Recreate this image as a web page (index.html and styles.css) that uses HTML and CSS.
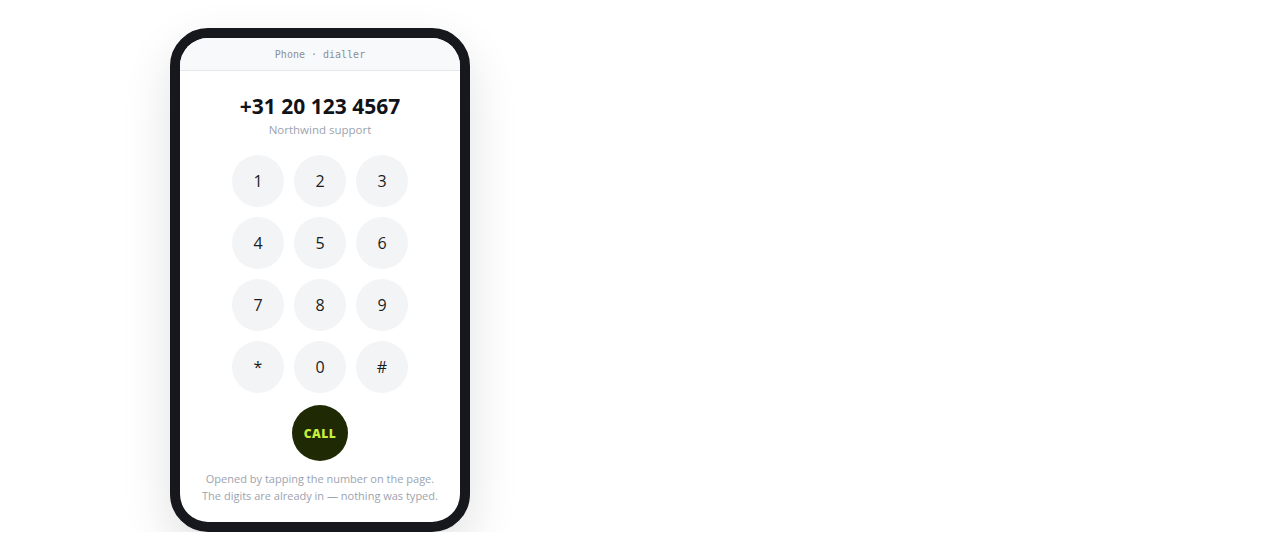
FILE: index.html
```html
<!DOCTYPE html>
<html lang="en">
<head>
<meta charset="utf-8">
<title>Phone dialler</title>
<link rel="stylesheet" href="styles.css">
</head>
<body>
<div class="phone">
  <div class="screen">
    <div class="bar">Phone · dialler</div>
    <div class="content">
      <div class="number">+31 20 123 4567</div>
      <div class="label">Northwind support</div>
      <div class="keypad">
        <button class="key">1</button>
        <button class="key">2</button>
        <button class="key">3</button>
        <button class="key">4</button>
        <button class="key">5</button>
        <button class="key">6</button>
        <button class="key">7</button>
        <button class="key">8</button>
        <button class="key">9</button>
        <button class="key">*</button>
        <button class="key">0</button>
        <button class="key">#</button>
      </div>
      <button class="call">CALL</button>
      <p class="note">Opened by tapping the number on the page.<br>The digits are already in — nothing was typed.</p>
    </div>
  </div>
</div>
</body>
</html>
```

FILE: styles.css
```css
html, body {
  margin: 0;
  padding: 0;
  background: #ffffff;
}
body {
  padding: 28px 0 0 170px;
  font-family: "Open Sans", "Noto Sans", sans-serif;
}
.phone {
  width: 300px;
  height: 504px;
  box-sizing: border-box;
  border: 10px solid #16181d;
  border-radius: 38px;
  background: #16181d;
  box-shadow: 0 20px 50px rgba(0, 0, 0, 0.12);
}
.screen {
  width: 280px;
  height: 484px;
  background: #ffffff;
  border-radius: 28px;
  overflow: hidden;
  display: flex;
  flex-direction: column;
}
.bar {
  height: 32px;
  border-bottom: 1px solid #e5e7eb;
  background: #f8f9fa;
  display: flex;
  align-items: center;
  justify-content: center;
  font-family: "DejaVu Sans Mono", "Liberation Mono", monospace;
  font-size: 10px;
  color: #8a8f98;
}
.content {
  display: flex;
  flex-direction: column;
  align-items: center;
  padding-top: 21px;
}
.number {
  font-size: 21px;
  line-height: 28px;
  font-weight: 700;
  color: #111318;
}
.label {
  margin-top: 2px;
  font-size: 11.5px;
  line-height: 16px;
  color: #9ca3af;
}
.keypad {
  margin-top: 17px;
  display: grid;
  grid-template-columns: repeat(3, 52px);
  grid-auto-rows: 52px;
  gap: 10px;
}
.key {
  border: none;
  padding: 0;
  border-radius: 50%;
  background: #f3f4f6;
  font-family: "Open Sans", "Noto Sans", sans-serif;
  font-size: 16px;
  color: #1a1c22;
}
.call {
  margin-top: 12px;
  width: 56px;
  height: 56px;
  border: none;
  padding: 0;
  border-radius: 50%;
  background: #1f2a05;
  color: #c8f03a;
  font-family: "Open Sans", "Noto Sans", sans-serif;
  font-size: 12px;
  font-weight: 800;
  letter-spacing: 0.5px;
}
.note {
  margin: 9px 0 0;
  text-align: center;
  font-size: 11px;
  line-height: 17px;
  color: #9ca3af;
}
```
